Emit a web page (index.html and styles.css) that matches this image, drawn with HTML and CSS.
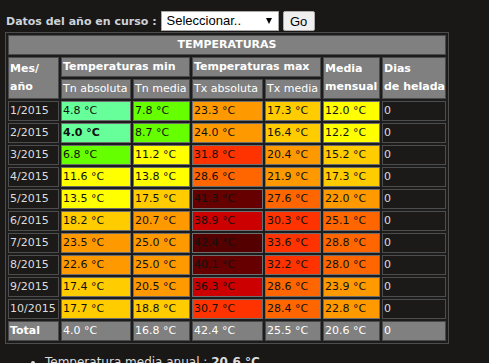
FILE: index.html
```html
<!DOCTYPE html>
<html lang="es">
<head>
<meta charset="utf-8">
<title>Temperaturas</title>
<link rel="stylesheet" href="styles.css">
</head>
<body>
<form class="picker">
  <label class="picker-label" for="anio">Datos del año en curso :</label>
  <span class="select-wrap">
    <select id="anio" class="select"><option>Seleccionar..</option></select>
  </span>
  <button type="button" class="go">Go</button>
</form>
<table class="temps">
  <colgroup>
    <col class="c1"><col class="c2"><col class="c3"><col class="c4"><col class="c5"><col class="c6"><col class="c7">
  </colgroup>
  <thead>
    <tr><th colspan="7" class="title">TEMPERATURAS</th></tr>
    <tr>
      <th rowspan="2" class="hd">Mes/<br>año</th>
      <th colspan="2" class="hd">Temperaturas min</th>
      <th colspan="2" class="hd">Temperaturas max</th>
      <th rowspan="2" class="hd">Media<br>mensual</th>
      <th rowspan="2" class="hd">Dias<br>de helada</th>
    </tr>
    <tr>
      <th class="sub">Tn absoluta</th>
      <th class="sub">Tn media</th>
      <th class="sub">Tx absoluta</th>
      <th class="sub">Tx media</th>
    </tr>
  </thead>
  <tbody>
    <tr><td class="m">1/2015</td><td class="mint">4.8 °C</td><td class="green">7.8 °C</td><td class="orange">23.3 °C</td><td class="gold">17.3 °C</td><td class="yellow">12.0 °C</td><td class="d">0</td></tr>
    <tr><td class="m">2/2015</td><td class="mint b">4.0 °C</td><td class="green">8.7 °C</td><td class="orange">24.0 °C</td><td class="gold">16.4 °C</td><td class="yellow">12.2 °C</td><td class="d">0</td></tr>
    <tr><td class="m">3/2015</td><td class="green">6.8 °C</td><td class="yellow">11.2 °C</td><td class="redorange">31.8 °C</td><td class="orange">20.4 °C</td><td class="gold">15.2 °C</td><td class="d">0</td></tr>
    <tr><td class="m">4/2015</td><td class="yellow">11.6 °C</td><td class="yellow">13.8 °C</td><td class="dkorange">28.6 °C</td><td class="orange">21.9 °C</td><td class="gold">17.3 °C</td><td class="d">0</td></tr>
    <tr><td class="m">5/2015</td><td class="yellow">13.5 °C</td><td class="gold">17.5 °C</td><td class="maroon">41.3 °C</td><td class="dkorange">27.6 °C</td><td class="orange">22.0 °C</td><td class="d">0</td></tr>
    <tr><td class="m">6/2015</td><td class="gold">18.2 °C</td><td class="orange">20.7 °C</td><td class="red">38.9 °C</td><td class="redorange">30.3 °C</td><td class="dkorange">25.1 °C</td><td class="d">0</td></tr>
    <tr><td class="m">7/2015</td><td class="orange">23.5 °C</td><td class="orange">25.0 °C</td><td class="maroon2">42.4 °C</td><td class="redorange">33.6 °C</td><td class="dkorange">28.8 °C</td><td class="d">0</td></tr>
    <tr><td class="m">8/2015</td><td class="orange">22.6 °C</td><td class="orange">25.0 °C</td><td class="maroon">40.1 °C</td><td class="redorange">32.2 °C</td><td class="dkorange">28.0 °C</td><td class="d">0</td></tr>
    <tr><td class="m">9/2015</td><td class="gold">17.4 °C</td><td class="orange">20.5 °C</td><td class="red">36.3 °C</td><td class="dkorange">28.6 °C</td><td class="orange">23.9 °C</td><td class="d">0</td></tr>
    <tr><td class="m">10/2015</td><td class="gold">17.7 °C</td><td class="gold">18.8 °C</td><td class="redorange">30.7 °C</td><td class="dkorange">28.4 °C</td><td class="orange">22.8 °C</td><td class="d">0</td></tr>
  </tbody>
  <tfoot>
    <tr><td class="tot-label">Total</td><td class="tot">4.0 °C</td><td class="tot">16.8 °C</td><td class="tot">42.4 °C</td><td class="tot">25.5 °C</td><td class="tot">20.6 °C</td><td class="tot">0</td></tr>
  </tfoot>
</table>
<ul class="summary">
  <li>Temperatura media anual : <b>20.6 °C</b></li>
</ul>
</body>
</html>
```
FILE: styles.css
```css
html, body {
  margin: 0;
  padding: 0;
  background: #1a1816;
}
body {
  padding: 11px 5px 0 5px;
  font-family: "DejaVu Sans", Verdana, sans-serif;
  font-size: 11px;
  color: #dddddd;
}
.picker {
  display: flex;
  align-items: center;
  gap: 4px;
  height: 20px;
  margin: 0 0 1px 0;
}
.picker-label {
  font-weight: bold;
  color: #cdd3da;
  padding-left: 1px;
}
.select-wrap {
  position: relative;
  display: inline-block;
}
.select-wrap::after {
  content: "";
  position: absolute;
  right: 7px;
  top: 7px;
  width: 0;
  height: 0;
  border-left: 3.5px solid transparent;
  border-right: 3.5px solid transparent;
  border-top: 6px solid #000;
  pointer-events: none;
}
.select {
  appearance: none;
  -webkit-appearance: none;
  width: 118px;
  height: 20px;
  box-sizing: border-box;
  margin: 0;
  padding: 0 0 0 5px;
  border: 1px solid #a9a9a9;
  border-radius: 0;
  background: #ffffff;
  color: #000;
  font-family: "Liberation Sans", Arial, sans-serif;
  font-size: 13px;
  line-height: 18px;
}
.go {
  width: 32px;
  height: 20px;
  box-sizing: border-box;
  margin: 0;
  padding: 0;
  border: 1px solid #adadad;
  border-radius: 2px;
  background: #efefef;
  color: #000;
  font-family: "Liberation Sans", Arial, sans-serif;
  font-size: 13px;
}
.temps {
  table-layout: fixed;
  width: 444px;
  border-collapse: separate;
  border-spacing: 2px;
  border: 1px solid #4c4c4c;
  background: #1c1c1c;
}
.c1 { width: 51px; }
.c2 { width: 70px; }
.c3 { width: 57px; }
.c4 { width: 71px; }
.c5 { width: 56px; }
.c6 { width: 57px; }
.c7 { width: 64px; }
.temps th,
.temps td {
  height: 18px;
  padding: 0 1px;
  border: 1px solid #5e5e5e;
  line-height: 18px;
  text-align: left;
  white-space: nowrap;
  overflow: hidden;
}
.temps th {
  background: #808080;
  color: #ffffff;
  border-color: #4a4a4a;
}
.temps .title {
  text-align: center;
  font-weight: bold;
}
.temps .hd {
  font-weight: bold;
  vertical-align: middle;
}
.temps .sub {
  font-weight: normal;
}
.temps td {
  color: #111;
  border-color: #6e6e6e;
}
.temps .m,
.temps .d {
  background: #1b1a19;
  color: #dddddd;
  border-color: #4d4d4d;
}
.temps .b { font-weight: bold; }
.mint { background: #66ff99; }
.green { background: #66ff00; }
.yellow { background: #ffff00; }
.gold { background: #ffcc00; }
.orange { background: #ff9900; }
.dkorange { background: #ff6600; }
.redorange { background: #ff3300; }
.red { background: #cc0000; }
.maroon { background: #660000; }
.maroon2 { background: #550000; }
.temps .tot-label,
.temps .tot {
  background: #808080;
  color: #ffffff;
  border-color: #4a4a4a;
}
.temps .tot-label { font-weight: bold; }
.summary {
  margin: 11px 0 0 0;
  padding-left: 40px;
  font-size: 12px;
  color: #dddddd;
}
```
